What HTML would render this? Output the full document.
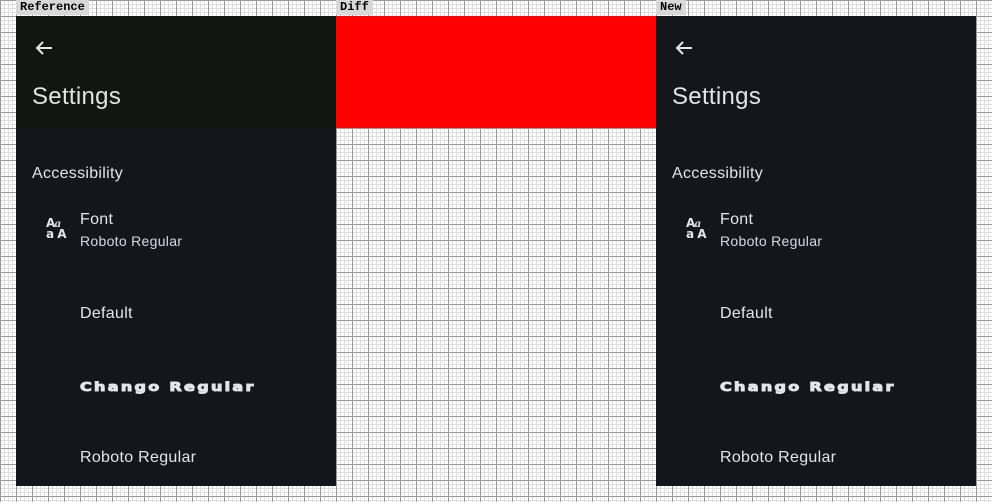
<!DOCTYPE html>
<html><head><style>
*{margin:0;padding:0;box-sizing:border-box}
body{width:992px;height:502px;position:relative;overflow:hidden;background-color:#fff;
background-image:
linear-gradient(to right,#999 1px,transparent 1px),
linear-gradient(to bottom,#999 1px,transparent 1px),
linear-gradient(to right,#ddd 1px,transparent 1px),
linear-gradient(to bottom,#ddd 1px,transparent 1px);
background-size:16px 16px,16px 16px,4px 4px,4px 4px;
font-family:"Liberation Sans",sans-serif;}
.lbl{position:absolute;top:0;height:15px;background:#d8d8d8;font:bold 12px "Liberation Mono",monospace;color:#000;padding:0 4px;line-height:15px}
.panel{position:absolute;top:16px;width:320px;height:470px;background:#14161c;color:#e4e4ea}
.hdr{position:absolute;left:0;top:0;width:320px;height:112px}
.t{position:absolute;left:64px;white-space:nowrap;letter-spacing:0.3px}
.arrow{position:absolute;left:16px;top:20px}
.ico{position:absolute;left:30px;top:202px;font:bold 12px 'DejaVu Sans',sans-serif;line-height:11px;color:#e4e4ea;letter-spacing:-0.5px}
.ch{top:361px;font:900 16px 'DejaVu Sans',sans-serif;letter-spacing:2.3px;-webkit-text-stroke:1.2px #e4e4ea;transform:scaleY(0.8);transform-origin:left}
</style></head><body>
<div class="lbl" style="left:16px">Reference</div>
<div class="lbl" style="left:336px">Diff</div>
<div class="lbl" style="left:656px">New</div>
<div style="position:absolute;left:336px;top:16px;width:320px;height:112px;background:#ff0000"></div>

<div class="panel" style="left:16px">
<div class="hdr" style="background:#111611"></div>
<svg class="arrow" width="24" height="24" viewBox="0 0 24 24"><path d="M20 12H5M11 6l-6 6 6 6" stroke="#e4e4e4" stroke-width="2" fill="none"/></svg>
<div class="t" style="left:16px;top:67px;font-size:24px;color:#e2e4de">Settings</div>
<div class="t" style="left:16px;top:149px;font-size:16px">Accessibility</div>
<div class="ico">A<i style="font-family:'Liberation Serif'">a</i><br>a A</div>
<div class="t" style="top:195px;font-size:16px">Font</div>
<div class="t" style="top:217px;font-size:14px;color:#d8d8e4">Roboto Regular</div>
<div class="t" style="top:289px;font-size:16px">Default</div>
<div class="t ch">Chango Regular</div>
<div class="t" style="top:433px;font-size:16px">Roboto Regular</div>
</div>

<div class="panel" style="left:656px">
<div class="hdr" style="background:#14161c"></div>
<svg class="arrow" width="24" height="24" viewBox="0 0 24 24"><path d="M20 12H5M11 6l-6 6 6 6" stroke="#e4e4e4" stroke-width="2" fill="none"/></svg>
<div class="t" style="left:16px;top:67px;font-size:24px;color:#e2e4e8">Settings</div>
<div class="t" style="left:16px;top:149px;font-size:16px">Accessibility</div>
<div class="ico">A<i style="font-family:'Liberation Serif'">a</i><br>a A</div>
<div class="t" style="top:195px;font-size:16px">Font</div>
<div class="t" style="top:217px;font-size:14px;color:#d8d8e4">Roboto Regular</div>
<div class="t" style="top:289px;font-size:16px">Default</div>
<div class="t ch">Chango Regular</div>
<div class="t" style="top:433px;font-size:16px">Roboto Regular</div>
</div>
</body></html>
